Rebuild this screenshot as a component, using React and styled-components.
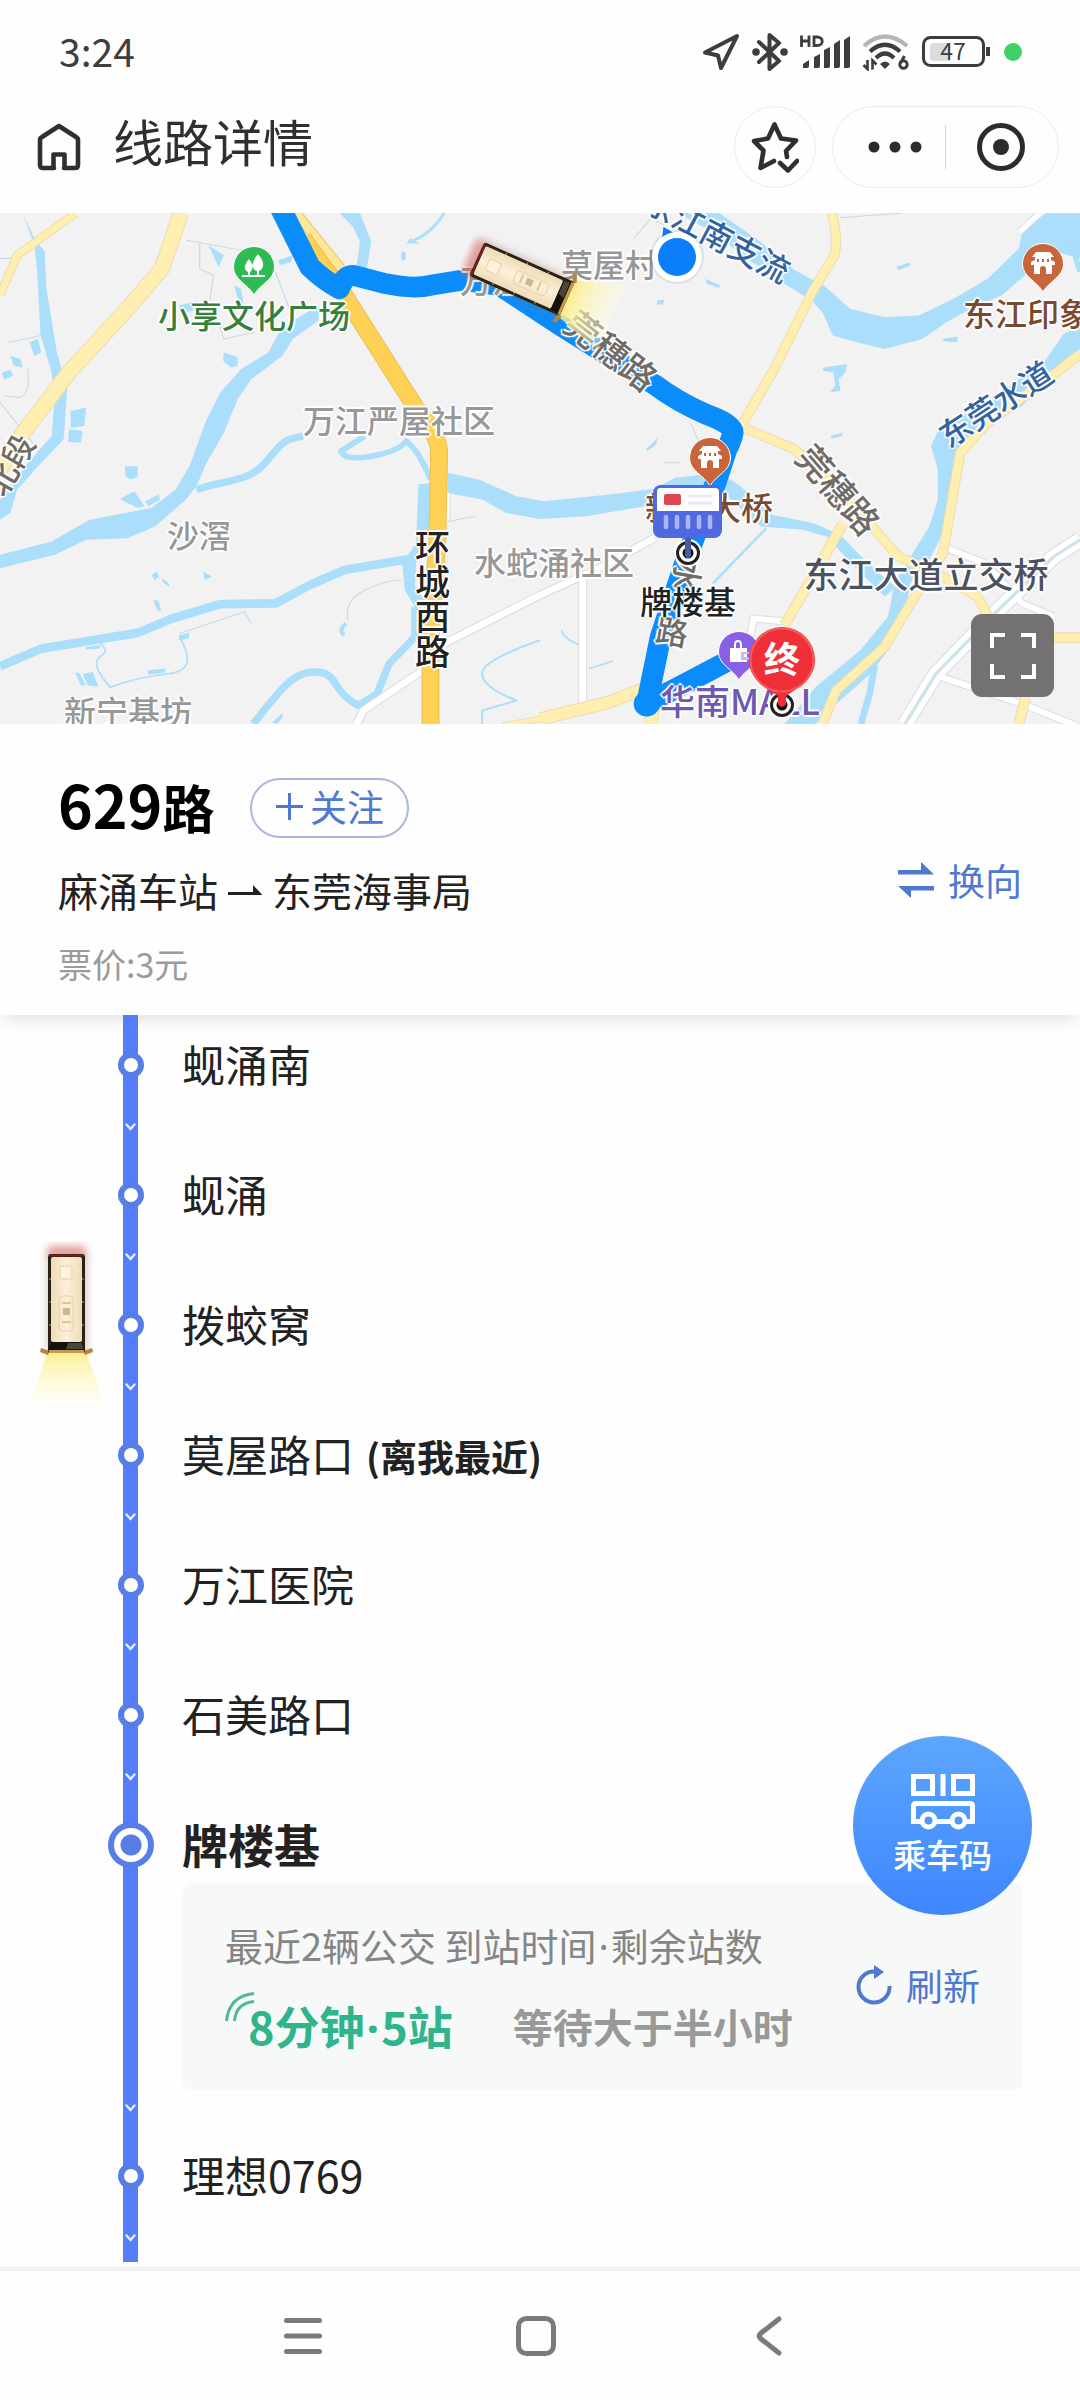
import React from "react";
import styled, { createGlobalStyle, css } from "styled-components";

const GlobalStyle = createGlobalStyle`
  *, *::before, *::after { box-sizing: border-box; }
  body {
    margin: 0;
    background: #fefefe;
    color: #222;
    font-family: "Noto Sans CJK SC", "Noto Sans", sans-serif;
  }
  button {
    margin: 0;
    padding: 0;
    border: 0;
    background: none;
    font: inherit;
    color: inherit;
    cursor: pointer;
  }
  h1, h2, p, ol { margin: 0; padding: 0; font-weight: 400; }
  ol { list-style: none; }
  svg { display: block; flex: none; }
`;

const Page = styled.div`
  display: flex;
  flex-direction: column;
  min-height: 100vh;
`;

/* ---------- status bar and header ---------- */

const StatusBar = styled.div`
  display: flex;
  align-items: center;
  justify-content: space-between;
  height: 80px;
  padding: 24px 58px 0 59px;
  color: #3d3d3d;
`;

const Clock = styled.time`
  padding-bottom: 4px;
  font-size: 39px;
  line-height: 56px;
`;

const StatusIcons = styled.div`
  display: flex;
  align-items: center;
  gap: 12px;
`;

const Header = styled.header`
  display: flex;
  align-items: center;
  height: 133px;
  padding: 0 21px 0 37px;
  color: #2f2f2f;
`;

const Title = styled.h1`
  flex: 1;
  padding: 0 0 14px 32px;
  font-size: 50px;
  line-height: 64px;
`;

const RoundButton = styled.button`
  display: flex;
  align-items: center;
  justify-content: center;
  width: 82px;
  height: 82px;
  border: 1px solid #ececec;
  border-radius: 50%;
`;

const Capsule = styled.div`
  display: flex;
  align-items: center;
  width: 227px;
  height: 82px;
  margin-left: 16px;
  padding-left: 12px;
  border: 1px solid #ececec;
  border-radius: 41px;
`;

const CapsuleButton = styled.button`
  display: flex;
  align-items: center;
  justify-content: center;
  width: 100px;
  height: 44px;

  & + & {
    flex: 1;
    padding-right: 2px;
    border-left: 1px solid #d4d4d4;
  }
`;

/* ---------- map ---------- */

const MapView = styled.section`
  position: relative;
  display: flex;
  justify-content: center;
  height: 511px;
  overflow: hidden;
  background: #f3f2f3;
`;

const MapCanvas = styled.div`
  position: relative;
  flex: none;
  width: 1080px;
  height: 511px;
`;

const MapLayer = styled.svg`
  position: absolute;
  inset: 0;
`;

const MapLabel = styled.span`
  position: absolute;
  left: ${(p) => p.$x}px;
  top: ${(p) => p.$y}px;
  padding-bottom: 4px;
  transform: translate(-50%, -50%) rotate(${(p) => p.$turn || 0}deg);
  color: ${(p) => p.$color};
  font-size: ${(p) => p.$size || 32}px;
  font-weight: 500;
  line-height: 40px;
  white-space: pre;
  text-shadow: 2px 0 1px #fff, -2px 0 1px #fff, 0 2px 1px #fff, 0 -2px 1px #fff;
  ${(p) => p.$vertical && css`writing-mode: vertical-rl;`}
`;

const FullscreenButton = styled.button`
  position: absolute;
  right: 26px;
  bottom: 27px;
  display: flex;
  align-items: center;
  justify-content: center;
  width: 83px;
  height: 83px;
  border-radius: 11px;
  background: #737171;
`;

/* ---------- route summary ---------- */

const Summary = styled.section`
  display: flex;
  align-items: center;
  justify-content: space-between;
  padding: 54px 58px 29px;
  background: #fefefe;
  box-shadow: 0 8px 16px -4px rgba(0, 0, 0, 0.12);
`;

const RouteHead = styled.div`
  display: flex;
  align-items: center;
  gap: 36px;
  height: 60px;
`;

const RouteName = styled.h2`
  padding-bottom: 6px;
  font-size: 52px;
  font-weight: 700;
  line-height: 60px;
  color: #000;
`;

const RouteNumber = styled.span`
  font-size: 59px;
`;

const FollowButton = styled.button`
  display: flex;
  align-items: center;
  justify-content: center;
  gap: 7px;
  width: 159px;
  height: 60px;
  padding-bottom: 4px;
  border: 2px solid #aab8dc;
  border-radius: 30px;
  color: #4f78d2;
  font-size: 37px;
  line-height: 52px;
`;

const Direction = styled.p`
  display: flex;
  align-items: center;
  gap: 10px;
  margin-top: 24px;
  font-size: 40px;
  line-height: 56px;
`;

const Fare = styled.p`
  margin-top: 24px;
  color: #9b9b9b;
  font-size: 34px;
  line-height: 44px;
`;

const TextButton = styled.button`
  display: flex;
  align-items: center;
  gap: 14px;
  padding-bottom: 4px;
  color: #4f78d2;
  font-size: 37px;
  line-height: 52px;
`;

/* ---------- stops ---------- */

const Stops = styled.section`
  position: relative;
`;

const Stop = styled.li`
  display: flex;
  min-height: 130px;
  padding-left: 123px;

  &:last-child { min-height: 136px; }
`;

const Rail = styled.div`
  display: flex;
  flex: none;
  flex-direction: column;
  align-items: center;
  justify-content: space-between;
  width: 15px;
  padding-bottom: 12px;
  background: #557cfb;

  ${Stop}:last-child & { padding-bottom: 18px; }
`;

const NodeSlot = styled.div`
  display: flex;
  align-items: center;
  height: 100px;
`;

const Node = styled.span`
  width: 26px;
  height: 26px;
  border: 6px solid #577ee6;
  border-radius: 50%;
  background: #fff;
`;

const TargetNode = styled(Node)`
  width: 46px;
  height: 46px;
  background: radial-gradient(circle, #577ee6 10px, #fff 11px);
`;

const StopBody = styled.div`
  flex: 1;
  padding-right: 57px;
  padding-left: 44px;
`;

const StopName = styled.h2`
  padding-top: 16px;
  color: #222;
  font-size: ${(p) => (p.$target ? 46 : 43)}px;
  font-weight: ${(p) => (p.$target ? 700 : 400)};
  line-height: 64px;
`;

const Nearest = styled.strong`
  margin-left: 12px;
  font-size: 37px;
  font-weight: 700;
`;

const ArrivalCard = styled.div`
  display: flex;
  align-items: center;
  justify-content: space-between;
  margin: 8px 0 36px;
  padding: 34px 43px;
  border-radius: 10px;
  background: #f7f9f9;
`;

const CardCaption = styled.p`
  color: #858585;
  font-size: 38px;
  line-height: 56px;
`;

const Dot = styled.span`
  padding: 0 2px;
  font-family: "Noto Sans", sans-serif;
`;

const Arrivals = styled.div`
  display: flex;
  gap: 60px;
  height: 56px;
  margin-top: 24px;
  margin-bottom: 2px;
  line-height: 56px;
  white-space: nowrap;
`;

const NextBus = styled.span`
  position: relative;
  padding-left: 23px;
  color: #2fb48b;
  font-size: 45px;
  font-weight: 700;

  svg { position: absolute; top: -6px; left: 0; }
`;

const LaterBus = styled.span`
  color: #999;
  font-size: 40px;
  font-weight: 700;
`;

const LiveBus = styled.div`
  position: absolute;
  top: 226px;
  left: 32px;
`;

const RideCodeButton = styled.button`
  position: absolute;
  right: 48px;
  bottom: 347px;
  display: flex;
  flex-direction: column;
  align-items: center;
  width: 179px;
  height: 179px;
  padding-top: 37px;
  border-radius: 50%;
  background: linear-gradient(#5ca6fd, #3f86fe);
  color: #fff;
  font-size: 33px;
  font-weight: 500;
  line-height: 48px;
`;

/* ---------- system navigation ---------- */

const SystemNav = styled.nav`
  display: flex;
  align-items: center;
  justify-content: center;
  gap: 113px;
  height: 134px;
  margin-top: 5px;
  padding-right: 8px;
  border-top: 4px solid #f1f1f1;
`;

const NavButton = styled.button`
  display: flex;
  align-items: center;
  justify-content: center;
  width: 120px;
  height: 80px;
  color: #7b7b7b;
`;

/* ---------- drawings ---------- */

const LocationIcon = () => (
  <svg width="38" height="38" viewBox="0 0 38 38" fill="none" stroke="currentColor" strokeWidth="4" strokeLinejoin="round">
    <path d="M35 3 3 19.500 16 22.500 19 35Z" />
  </svg>
);

const BluetoothIcon = () => (
  <svg width="36" height="40" viewBox="0 0 36 40" fill="none" stroke="currentColor" strokeWidth="4" strokeLinejoin="round" strokeLinecap="round">
    <path d="M7 10 27 29 17.500 37V3L27 11 7 30" />
    <circle cx="4" cy="20" r="1.800" fill="currentColor" />
    <circle cx="32" cy="20" r="1.800" fill="currentColor" />
  </svg>
);

const SignalIcon = () => (
  <svg width="50" height="36" viewBox="0 0 50 36" fill="currentColor">
    <path d="M1.500 1.500V13M9 1.500V13M1.500 7H9M14 3V11.500H17C24 11.500 24 3 17 3Z" fill="none" stroke="currentColor" strokeWidth="2.800" />
    <path d="M3 34v-4l6-4v6q0 2-2 2ZM14 34V23l6-3v12q0 2-2 2ZM24 34V16l6-3v19q0 2-2 2ZM34 34V10l6-4v26q0 2-2 2ZM44 34V6l6-4v30q0 2-2 2Z" />
  </svg>
);

const WifiIcon = () => (
  <svg width="48" height="38" viewBox="0 0 48 38" fill="none" stroke="currentColor" strokeWidth="4.200">
    <path d="M2 13Q23-6 45 13" stroke="#b5b5b5" />
    <path d="M8 18.500Q23 5 38 18.500M14 25Q23 16 32 25" />
    <path d="M18 31q5-5 10 0l-5 5Z" fill="currentColor" stroke="none" />
    <path d="M5.500 27v9l-4-4M10.500 36.500v-9l4 4" strokeWidth="2.600" />
    <circle cx="41.500" cy="31.500" r="3.700" strokeWidth="3" />
    <path d="M38.500 30 42.500 23" strokeWidth="3" />
  </svg>
);

const BatteryIcon = () => (
  <svg width="70" height="32" viewBox="0 0 70 32">
    <rect x="1.500" y="1.500" width="60" height="28" rx="7" fill="none" stroke="#3d3d3d" strokeWidth="3" />
    <path d="M12 7h16v18H12q-4 0-4-4V11q0-4 4-4Z" fill="#dcdcdc" />
    <path d="M66 11v9" stroke="#3d3d3d" strokeWidth="4" />
    <text x="31" y="24" textAnchor="middle" fontFamily="Noto Sans CJK SC, sans-serif" fontSize="23" fill="#3d3d3d">47</text>
  </svg>
);

const PrivacyDot = styled.span`
  width: 18px;
  height: 18px;
  border-radius: 50%;
  background: #3ed164;
`;

const HomeIcon = () => (
  <svg width="44" height="48" viewBox="0 0 44 48" fill="none" stroke="currentColor" strokeWidth="4.600" strokeLinejoin="round" strokeLinecap="round">
    <path d="M17 45H6Q3 45 3 42V17Q3 15 5 14L22 3 39 14Q41 15 41 17V42Q41 45 38 45H27M16.500 44V31.500H27.500V44" />
  </svg>
);

const StarIcon = () => (
  <svg width="48" height="52" viewBox="0 0 48 52" fill="none" stroke="currentColor" strokeWidth="4.600" strokeLinejoin="round" strokeLinecap="round">
    <path d="M36 36 35 30 45 19.500 30 17.500 23.500 3.500 17 17.500 3 20 12.500 29.500 9.500 47 23 40" />
    <path d="M29 42 37 49.500 46 40" />
  </svg>
);

const MoreIcon = () => (
  <svg width="54" height="12" viewBox="0 0 54 12" fill="#2b2b2b">
    <circle cx="6" cy="6" r="5.500" />
    <circle cx="27" cy="6" r="5.500" />
    <circle cx="48" cy="6" r="5.500" />
  </svg>
);

const CloseIcon = () => (
  <svg width="50" height="50" viewBox="0 0 50 50">
    <circle cx="25" cy="25" r="21.500" fill="none" stroke="#2b2b2b" strokeWidth="5" />
    <circle cx="25" cy="25" r="8" fill="#2b2b2b" />
  </svg>
);

const BusArt = () => (
  <g>
    <defs>
      <linearGradient id="lamp" x1="0" y1="0" x2="0" y2="1">
        <stop offset="0" stopColor="#fbef86" stopOpacity="0.900" />
        <stop offset="1" stopColor="#fffbe0" stopOpacity="0.350" />
      </linearGradient>
      <linearGradient id="roof" x1="0" y1="0" x2="1" y2="0">
        <stop offset="0" stopColor="#eedcb8" />
        <stop offset="0.500" stopColor="#fdf0d8" />
        <stop offset="1" stopColor="#eedcb8" />
      </linearGradient>
      <filter id="soft" x="-50%" y="-50%" width="200%" height="200%">
        <feGaussianBlur stdDeviation="4" />
      </filter>
    </defs>
    <rect x="15" y="9" width="40" height="104" rx="4" fill="#8a6a40" opacity="0.350" filter="url(#soft)" />
    <rect x="16" y="5" width="37" height="10" fill="#e0605c" opacity="0.550" filter="url(#soft)" />
    <path d="M15 111H54L71 160H0Z" fill="url(#lamp)" />
    <path d="M9 107 18 110 16 114 8 111ZM60 107 51 110 53 114 61 111Z" fill="#b3873f" />
    <rect x="16" y="13" width="37" height="99" rx="3" fill="#2a2118" />
    <path d="M17 14.500H52" stroke="#7c1f16" strokeWidth="2" />
    <path d="M17 38H52M17 61H52M17 84H52" stroke="#c99d55" strokeWidth="1" />
    <rect x="19" y="16" width="31" height="85" rx="2" fill="url(#roof)" />
    <path d="M19 101H50L52 109H17Z" fill="#14120d" />
    <path d="M36 102H50L51 108H34Z" fill="#4a4638" />
    <path d="M17 110.500H52" stroke="#c79a48" strokeWidth="3" />
    <rect x="28" y="25" width="12" height="13" rx="2" fill="#fdf2dc" stroke="#e4d1a8" />
    <rect x="27" y="55" width="14" height="35" rx="4" fill="none" stroke="#e4d1a8" />
    <rect x="31" y="67" width="7" height="7" fill="#c9b896" />
    <path d="M30 62H39M30 81H39" stroke="#d9c7a0" strokeWidth="2" />
  </g>
);

const RIVERS = [
  "M65 24 100 100 130 140 135 250 165 440 195 545 185 700 120 770 50 850 30 920 0 940V880L30 830 150 690 158 590 150 500 118 390 108 200 100 120Z",
  "M0 1045 150 1005 260 940 440 905 510 850 550 780 600 640 640 560 700 490 780 440 810 380 860 340 925 300V345L850 400 820 450 730 520 690 580 650 680 600 770 570 840 540 880 450 960 370 995 250 1000 160 1045 0 1085Z",
  "M985 24H1045L1078 110 1065 190H1035L1045 110 1025 65Z",
  "M1300 800 1390 820 1500 870 1580 885 1768 865 1900 848 1960 815 2090 800 2150 840 2240 925 2360 950 2440 985 2520 1070 2600 1140 2570 1170 2480 1080 2400 990 2330 970 2210 960 2100 860 1900 895 1700 930 1568 938 1470 920 1400 880 1300 860Z",
  "M1215 835 1252 830 1245 960 1208 1070 1205 1140 1240 1190 1210 1210 1175 1150 1168 1070 1208 1010Z",
  "M1968 24H2088L2208 110 2308 195 2398 245 2468 310 2568 335 2668 330 2768 280 2868 220 2958 130 2968 80 3038 24H3136V160L3068 140 2988 200 2908 270 2818 310 2748 350 2678 400 2568 430 2468 405 2418 390 2388 320 2358 285 2268 230 2168 160 2068 80Z",
  "M3136 360 3088 385 3038 460 2868 590 2728 665 2703 720 2723 790V880L2698 960 2638 1060 2598 1130 2578 1230 2498 1330 2368 1440 2278 1550H2368L2428 1490 2528 1400 2578 1330 2628 1220 2643 1130 2698 1060 2748 960 2768 850 2783 740 2818 690 2968 600 3068 490 3136 430Z",
];

const PONDS =
  "M205 615 250 605 245 660 205 665ZM200 670 240 675 235 710 198 708ZM362 780H400V810L380 820 365 812ZM348 878 390 855 420 900 400 905ZM422 885 460 865 465 880 430 900ZM650 440 690 455V480L670 485 648 465ZM30 450 60 460 65 485 40 480ZM5 500 30 492 38 510 12 522ZM520 300 575 285 580 310 525 325ZM605 120 650 150 635 185ZM808 165 850 150 845 170 812 180ZM680 240 700 250 708 300 690 280ZM440 1105 455 1095 462 1110 448 1120ZM470 1115 490 1130 492 1140 472 1125ZM590 1095 615 1110 595 1120ZM445 1180 460 1182 468 1212 458 1212ZM248 1320 290 1315V1325L250 1328ZM520 1285 550 1278 548 1295 520 1300ZM428 1390 480 1385 478 1398 430 1402ZM218 1397 230 1397 250 1435H235ZM240 1400 270 1395 285 1438 255 1435ZM1165 140H1178V165H1165ZM1190 100 1220 115 1180 115ZM85 410 110 400 120 440 100 450ZM790 1545 820 1518 822 1528 805 1550ZM2602 185 2640 172 2645 180 2610 195ZM2048 220 2090 240 2088 248 2052 235ZM1908 285 1928 283 1926 298 1908 297ZM2390 485 2460 475 2455 500 2435 520 2440 555 2410 560 2425 540 2420 500 2390 495ZM2412 690 2448 680 2445 690 2415 698ZM2735 400 2780 393V410L2745 408ZM1875 730 1910 695 1905 715 1880 735Z";

const STREAMS = [
  ["M570 850C650 820 720 830 770 770S820 700 880 690", 22],
  ["M1060 690 990 735Q1000 765 1080 750T1180 705Q1220 740 1250 820", 17],
  ["M0 1378 120 1325 400 1278 500 1235 640 1192 800 1190 900 1135 1000 1090 1200 1055", 26],
  ["M1205 1200V1290L1130 1370 1095 1460 1040 1495C960 1450 985 1400 920 1395S820 1440 735 1550", 22],
  ["M1290 24Q1250 90 1190 110", 9],
  ["M1568 1300Q1400 1360 1400 1400T1500 1480L1400 1510V1550", 6],
  ["M290 1310Q320 1330 290 1350T320 1440Q400 1410 490 1400T520 1290", 5],
  ["M1000 1285Q980 1270 1005 1250", 12],
  ["M2540 1375 2525 1460 2500 1550", 20],
  ["M2225 965 2070 1130", 7],
  ["M1710 1385 1780 1362M1630 1270Q1640 1300 1690 1315", 5],
  ["M3110 110 3136 200", 16],
];

const THIN_LINES =
  "M540 105 730 140M580 110V190L620 210 610 280 650 400 740 380M800 200 840 310M1010 1240Q1000 1180 1060 1150T1165 1120M520 1280 710 1215 730 1250M1300 945 1380 930M0 590 110 730M25 410 120 390M80 490Q90 560 60 575L10 570M0 160H50M1840 100 1890 40 1930 60M2440 38 2620 24M2005 650 2030 710M1925 770H1975";

const WHITE_ROADS = [
  ["M1035 1550 1055 1510 1220 1395 1290 1310 1568 1165 1740 1085 1900 995", 20],
  ["M1692 1105V1500", 20],
  ["M2960 80 3020 24", 16],
  ["M3136 1000 3060 1050 2898 1210 2718 1400 2628 1550", 42],
  ["M2718 1405 2968 1490 3136 1560", 18],
  ["M2748 1025 2860 1070 2968 1190 3060 1230", 18],
  ["M2178 1290 2188 1235 2290 1245", 18],
  ["M1300 860V940", 10],
];

const YELLOW_ROADS = [
  ["M525 24 470 190 370 310 200 500 60 690 0 790", 42],
  ["M220 24 50 150 0 270", 20],
  ["M2415 24Q2435 100 2423 150L2358 260 2248 490 2158 650", 24],
  ["M2158 665 2308 730 2448 860 2608 1050 2738 1110 2838 1170 2870 1230", 24],
  ["M2448 950 2388 1060 2278 1255", 26],
  ["M3136 445 3068 500 2868 650 2788 740 2738 1040 2668 1150 2568 1320 2428 1450 2388 1550", 24],
  ["M1568 1535 1768 1485 1870 1445 1900 1470 1890 1550", 34],
  ["M3050 1292H3136", 26],
  ["M2978 1470 2958 1550", 26],
  ["M1460 1555 1568 1535", 14],
];

const ROUTE =
  "M815 10 900 185Q940 225 985 250 1000 210 1025 210L1120 235Q1200 252 1250 240L1340 225 1450 240 1628 360 1898 535Q1970 590 2050 625 2130 655 2128 680 2125 700 2110 730L2078 830 1998 1040 1918 1290 1878 1490 2108 1365 2190 1320";

const MapBase = () => (
  <MapLayer width="1080" height="511" viewBox="0 0 1080 511" aria-hidden="true">
    <g transform="translate(0 -8) scale(0.3444 0.3348)" fill="none" strokeLinejoin="round">
      <path d={RIVERS.join("")} fill="#aadefb" />
      <path d={PONDS} fill="#aadefb" />
      {STREAMS.map(([d, w]) => <path key={d} d={d} stroke="#aadefb" strokeWidth={w} />)}
      <path d={THIN_LINES} stroke="#c2d9e6" strokeWidth="3" />
      {WHITE_ROADS.map(([d, w]) => <path key={d} d={d} stroke="#dcdcdf" strokeWidth={w + 6} />)}
      {WHITE_ROADS.map(([d, w]) => <path key={d} d={d} stroke="#fff" strokeWidth={w} />)}
      <path d={WHITE_ROADS[3][0]} stroke="#cfe3ea" strokeWidth="10" />
      {YELLOW_ROADS.map(([d, w]) => <path key={d} d={d} stroke="#eedcae" strokeWidth={w + 6} />)}
      {YELLOW_ROADS.map(([d, w]) => <path key={d} d={d} stroke="#feeeaf" strokeWidth={w} />)}
      <path d="M860 24 990 190" stroke="#e9c672" strokeWidth="30" />
      <path d="M860 24 990 190" stroke="#fee79a" strokeWidth="24" />
      <path d="M880 100 1000 270 1210 610Q1275 690 1275 740L1270 1000 1250 1300V1560" stroke="#eebd55" strokeWidth="52" />
      <path d="M880 100 1000 270 1210 610Q1275 690 1275 740L1270 1000 1250 1300V1560" stroke="#fed053" strokeWidth="46" />
      <path d={ROUTE} stroke="#0b8cfb" strokeWidth="62" />
      <circle cx="1878" cy="1490" r="38" fill="#0b8cfb" />
    </g>
  </MapLayer>
);

const Pin = ({ x, y, color, children }) => (
  <g transform={`translate(${x} ${y})`}>
    <path d="M-20.500 0A20.500 20.500 0 1 1 20.500 0C20.500 13 6 17 0 28-6 17-20.500 13-20.500 0Z" fill={color} stroke="#fff" strokeWidth="1" />
    <g fill="#fff">{children}</g>
  </g>
);

const Temple = () => (
  <path d="M-7-12H7L11-7H8V-4L12-2V1H9V10H3V5A3 3 0 0 0-3 5V10H-9V1H-12V-2L-8-4V-7H-11ZM-6-5V-2H-4V-5ZM-1-5V-2H1V-5ZM4-5V-2H6V-5Z" fillRule="evenodd" />
);

const StationRing = ({ x, y }) => (
  <g transform={`translate(${x} ${y})`}>
    <circle r="14" fill="#fff" />
    <circle r="10.500" fill="#fff" stroke="#222" strokeWidth="3" />
    <circle r="5.500" fill="#111" />
  </g>
);

const MapMarkers = () => (
  <MapLayer width="1080" height="511" viewBox="0 0 1080 511" aria-hidden="true">
    <g transform="translate(522 66) rotate(-66) translate(-34.500 -62.500)">
      <BusArt />
    </g>
    <Pin x={254} y={54} color="#2fbb53">
      <path d="M4-13Q10-6 9-1 8 3 5 4V8H11V10H-12V8H-6V5Q-10 3-9-1-8-5-5-8-2-4-1-1-2 4-4 5V8H3V4Q-1 3-1-1-2-6 4-13Z" />
    </Pin>
    <Pin x={710} y={245} color="#c8653a"><Temple /></Pin>
    <Pin x={1043} y={51} color="#c8653a"><Temple /></Pin>
    <Pin x={739} y={439} color="#8860e6">
      <path d="M-9-4H-5V-7Q-5-12-1-12T3-7V-4H8V10H-9ZM-3-4H1V-7Q1-10-1-10T-3-7Z" fillRule="evenodd" />
      <path d="M2 0H10V2H5V5H10V8H2Z" fill="#c9b5fa" />
    </Pin>
    <circle cx="677" cy="44" r="27" fill="#000" opacity="0.080" />
    <path d="M663 13 687 27 660 37Z" fill="#0b7cf8" stroke="#fff" strokeWidth="1" />
    <circle cx="677" cy="44" r="25" fill="#fff" />
    <circle cx="677" cy="44" r="19" fill="#0a7ff9" />
    <StationRing x={688} y={340} />
    <path d="M688 322V342" stroke="#4a5aa0" strokeWidth="6" strokeLinecap="round" />
    <rect x="653" y="272" width="69" height="53" rx="8" fill="#5069e0" />
    <path d="M660 275H715Q719 275 719 279V298H657V279Q657 275 660 275Z" fill="#fff" />
    <rect x="664" y="281" width="17" height="11" rx="2" fill="#dd4650" />
    <path d="M688 283H712M688 290H712" stroke="#e4e8f8" strokeWidth="3" />
    <path d="M666 304V314M677 304V314M688 304V314M699 304V314M710 304V314" stroke="#a9b5f6" strokeWidth="4.500" strokeLinecap="round" />
    <StationRing x={782} y={492} />
    <path d="M749 447A33 33 0 1 1 815 447C815 467 796 476 786 483V491Q782 497 778 491V483C768 476 749 467 749 447Z" fill="#ef3038" />
    <circle cx="782" cy="447" r="31.500" fill="none" stroke="#f65c5c" strokeWidth="2" />
    <text x="782" y="460" textAnchor="middle" fontSize="36" fontWeight="700" fill="#fff" fontFamily="Noto Sans CJK SC, sans-serif">终</text>
  </MapLayer>
);

const GREY = "#979797";
const ROAD = "#6f6b66";
const WATER = "#33639f";

const LABELS = [
  { text: "小享文化广场", x: 254, y: 103, color: "#37803c" },
  { text: "万江严屋社区", x: 399, y: 208, color: GREY },
  { text: "沙滘", x: 199, y: 323, color: GREY },
  { text: "新宁基坊", x: 128, y: 499, color: GREY },
  { text: "水蛇涌社区", x: 554, y: 350, color: GREY },
  { text: "环城西路", x: 432, y: 388, color: "#222", size: 35, vertical: true },
  { text: "北段", x: 10, y: 252, color: ROAD, turn: -60 },
  { text: "万江", x: 492, y: 68, color: GREY },
  { text: "莫屋村", x: 609, y: 52, color: GREY },
  { text: "东江南支流", x: 717, y: 23, color: WATER, turn: 28 },
  { text: "莞穗路", x: 611, y: 138, color: ROAD, size: 35, turn: 38 },
  { text: "莞穗路", x: 838, y: 277, color: ROAD, size: 35, turn: 49 },
  { text: "东莞水道", x: 996, y: 191, color: WATER, turn: -33 },
  { text: "东江印象", x: 1027, y: 101, color: "#7a4a30" },
  { text: "新　大桥", x: 709, y: 295, color: "#7a4a30" },
  { text: "东江大道立交桥", x: 926, y: 362, color: "#4c5260", size: 35 },
  { text: "水", x: 687, y: 362, color: ROAD, turn: 100 },
  { text: "路", x: 672, y: 419, color: ROAD, turn: 10 },
  { text: "牌楼基", x: 688, y: 389, color: "#222" },
  { text: "华南MALL", x: 740, y: 489, color: "#6f58b4", size: 35 },
];

const ExpandIcon = () => (
  <svg width="46" height="46" viewBox="0 0 46 46" fill="none" stroke="#fff" strokeWidth="4">
    <path d="M2 15V2H15M31 2H44V15M44 31V44H31M15 44H2V31" />
  </svg>
);

const PlusIcon = () => (
  <svg width="27" height="27" viewBox="0 0 27 27" stroke="currentColor" strokeWidth="3">
    <path d="M0 13.500H27M13.500 0V27" />
  </svg>
);

const ArrowIcon = () => (
  <svg width="34" height="12" viewBox="0 0 34 12" fill="currentColor">
    <path d="M0 8H25V1L34 10.500V11H0Z" />
  </svg>
);

const SwapIcon = () => (
  <svg width="36" height="36" viewBox="0 0 36 36" fill="currentColor">
    <path d="M0 8H23V0L36 12.500H0ZM36 24V28.500H13V36L0 24Z" />
  </svg>
);

const ChevronIcon = () => (
  <svg width="11" height="12" viewBox="0 0 11 12" fill="none" stroke="#e6f1ff" strokeWidth="2.400" strokeLinecap="round">
    <path d="M1.500 3.500 5.500 8 9.500 3.500" />
  </svg>
);

const WaveIcon = () => (
  <svg width="30" height="30" viewBox="0 0 30 30" fill="none" stroke="#4fb898" strokeWidth="3">
    <path d="M1.500 29Q4 4 29 1.500M9.500 29Q11 11 29 9.500" />
  </svg>
);

const RefreshIcon = () => (
  <svg width="36" height="40" viewBox="0 0 36 40" fill="none" stroke="currentColor" strokeWidth="4">
    <path d="M33.500 21A15.500 15.500 0 1 1 18 6.500" />
    <path d="M18 0 28 7 18 14Z" fill="currentColor" stroke="none" />
  </svg>
);

const RideCodeIcon = () => (
  <svg width="64" height="57" viewBox="0 0 64 57" fill="none" stroke="currentColor" strokeWidth="5">
    <path d="M2.500 3.500H21.500V20.500H2.500ZM42.500 3.500H61.500V20.500H42.500ZM32 1V23" />
    <path d="M11 48.500H2.500V33Q2.500 30.500 5 30.500H59Q61.500 30.500 61.500 33V48.500H54M24 48.500H41" />
    <circle cx="17.500" cy="47.500" r="6.500" />
    <circle cx="47.500" cy="47.500" r="6.500" />
  </svg>
);

const MenuIcon = () => (
  <svg width="40" height="40" viewBox="0 0 40 40" stroke="currentColor" strokeWidth="5" strokeLinecap="round">
    <path d="M3.500 4.500H36.500M3.500 20H36.500M3.500 35.500H36.500" />
  </svg>
);

const SquareIcon = () => (
  <svg width="40" height="40" viewBox="0 0 40 40" fill="none" stroke="currentColor" strokeWidth="5">
    <rect x="2.500" y="2.500" width="35" height="35" rx="8" />
  </svg>
);

const BackIcon = () => (
  <svg width="26" height="40" viewBox="0 0 26 40" fill="none" stroke="currentColor" strokeWidth="5" strokeLinecap="round" strokeLinejoin="round">
    <path d="M23 3 4.500 17.500Q2 20 4.500 22.500L23 37" />
  </svg>
);

/* ---------- data ---------- */

const STOPS = [
  { name: "蚬涌南" },
  { name: "蚬涌" },
  { name: "拨蛟窝" },
  { name: "莫屋路口", nearest: true },
  { name: "万江医院" },
  { name: "石美路口" },
  { name: "牌楼基", target: true },
  { name: "理想0769" },
];

export default function App() {
  return (
    <Page>
      <GlobalStyle />
      <StatusBar>
        <Clock>3:24</Clock>
        <StatusIcons>
          <LocationIcon />
          <BluetoothIcon />
          <SignalIcon />
          <WifiIcon />
          <BatteryIcon />
          <PrivacyDot />
        </StatusIcons>
      </StatusBar>

      <Header>
        <button aria-label="首页"><HomeIcon /></button>
        <Title>线路详情</Title>
        <RoundButton aria-label="收藏"><StarIcon /></RoundButton>
        <Capsule>
          <CapsuleButton aria-label="更多"><MoreIcon /></CapsuleButton>
          <CapsuleButton aria-label="关闭"><CloseIcon /></CapsuleButton>
        </Capsule>
      </Header>

      <MapView aria-label="地图">
        <MapCanvas>
          <MapBase />
          {LABELS.map((l) => (
            <MapLabel key={`${l.text}${l.x}`} $x={l.x} $y={l.y} $color={l.color} $size={l.size} $turn={l.turn} $vertical={l.vertical}>
              {l.text}
            </MapLabel>
          ))}
          <MapMarkers />
        </MapCanvas>
        <FullscreenButton aria-label="全屏"><ExpandIcon /></FullscreenButton>
      </MapView>

      <Summary>
        <div>
          <RouteHead>
            <RouteName><RouteNumber>629</RouteNumber>路</RouteName>
            <FollowButton><PlusIcon />关注</FollowButton>
          </RouteHead>
          <Direction>麻涌车站<ArrowIcon />东莞海事局</Direction>
          <Fare>票价:3元</Fare>
        </div>
        <TextButton><SwapIcon />换向</TextButton>
      </Summary>

      <Stops>
        <ol>
          {STOPS.map((stop) => (
            <Stop key={stop.name}>
              <Rail>
                <NodeSlot>{stop.target ? <TargetNode /> : <Node />}</NodeSlot>
                <ChevronIcon />
              </Rail>
              <StopBody>
                <StopName $target={stop.target}>
                  {stop.name}
                  {stop.nearest && <Nearest>(离我最近)</Nearest>}
                </StopName>
                {stop.target && (
                  <ArrivalCard>
                    <div>
                      <CardCaption>最近2辆公交 到站时间<Dot>·</Dot>剩余站数</CardCaption>
                      <Arrivals>
                        <NextBus><WaveIcon />8分钟<Dot>·</Dot>5站</NextBus>
                        <LaterBus>等待大于半小时</LaterBus>
                      </Arrivals>
                    </div>
                    <TextButton><RefreshIcon />刷新</TextButton>
                  </ArrivalCard>
                )}
              </StopBody>
            </Stop>
          ))}
        </ol>
        <LiveBus>
          <svg width="72" height="166" viewBox="0 0 72 166" overflow="visible" aria-hidden="true"><BusArt /></svg>
        </LiveBus>
        <RideCodeButton><RideCodeIcon />乘车码</RideCodeButton>
      </Stops>

      <SystemNav aria-label="系统导航">
        <NavButton aria-label="最近任务"><MenuIcon /></NavButton>
        <NavButton aria-label="主屏幕"><SquareIcon /></NavButton>
        <NavButton aria-label="返回"><BackIcon /></NavButton>
      </SystemNav>
    </Page>
  );
}
